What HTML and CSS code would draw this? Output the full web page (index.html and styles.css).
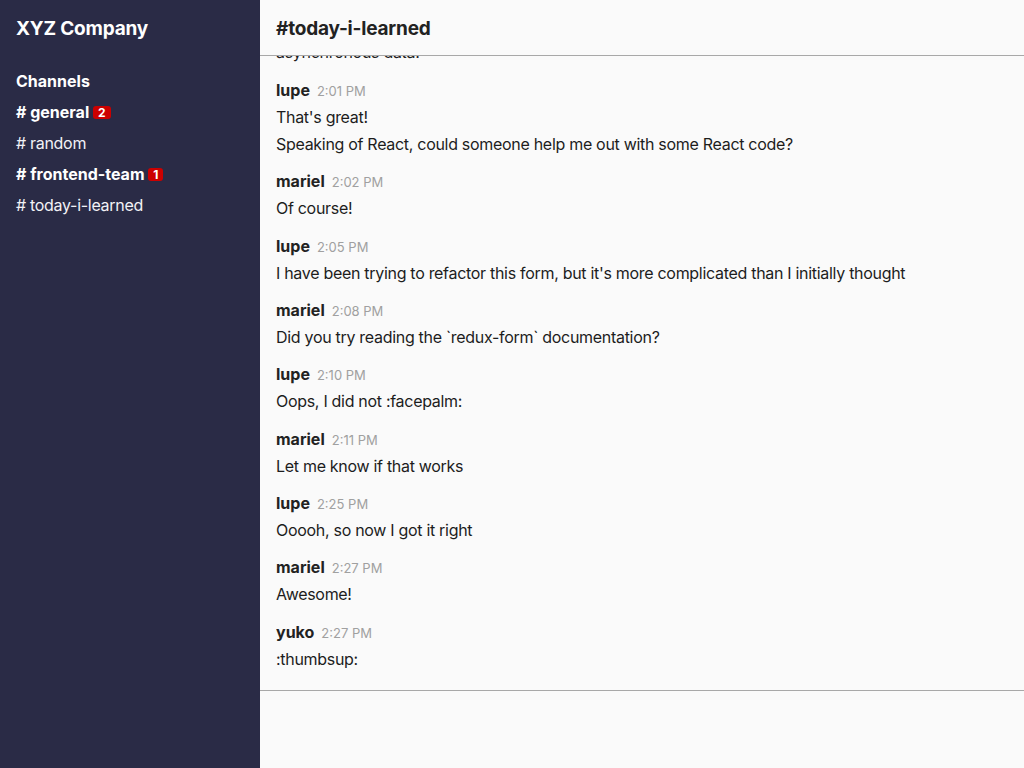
FILE: index.html
```html
<!DOCTYPE html>
<html>
<head>
<meta charset="utf-8">
<link rel="stylesheet" href="styles.css">
</head>
<body>
<div class="app">
  <aside class="sidebar">
    <h1 class="team">XYZ Company</h1>
    <h2 class="section">Channels</h2>
    <ul class="channels">
      <li class="channel unread"># general <span class="badge">2</span></li>
      <li class="channel"># random</li>
      <li class="channel unread"># frontend-team <span class="badge">1</span></li>
      <li class="channel"># today-i-learned</li>
    </ul>
  </aside>
  <main class="main">
    <header class="header"><h2 class="title">#today-i-learned</h2></header>
    <section class="messages">
      <div class="list">
        <div class="msg"><div class="meta"><span class="name">mariel</span><span class="time">1:58 PM</span></div><p class="text">Today I learned how to use React hooks to fetch</p><p class="text">asynchronous data.</p></div>
        <div class="msg"><div class="meta"><span class="name">lupe</span><span class="time">2:01 PM</span></div><p class="text">That's great!</p><p class="text">Speaking of React, could someone help me out with some React code?</p></div>
        <div class="msg"><div class="meta"><span class="name">mariel</span><span class="time">2:02 PM</span></div><p class="text">Of course!</p></div>
        <div class="msg"><div class="meta"><span class="name">lupe</span><span class="time">2:05 PM</span></div><p class="text">I have been trying to refactor this form, but it's more complicated than I initially thought</p></div>
        <div class="msg"><div class="meta"><span class="name">mariel</span><span class="time">2:08 PM</span></div><p class="text">Did you try reading the `redux-form` documentation?</p></div>
        <div class="msg"><div class="meta"><span class="name">lupe</span><span class="time">2:10 PM</span></div><p class="text">Oops, I did not :facepalm:</p></div>
        <div class="msg"><div class="meta"><span class="name">mariel</span><span class="time">2:11 PM</span></div><p class="text">Let me know if that works</p></div>
        <div class="msg"><div class="meta"><span class="name">lupe</span><span class="time">2:25 PM</span></div><p class="text">Ooooh, so now I got it right</p></div>
        <div class="msg"><div class="meta"><span class="name">mariel</span><span class="time">2:27 PM</span></div><p class="text">Awesome!</p></div>
        <div class="msg"><div class="meta"><span class="name">yuko</span><span class="time">2:27 PM</span></div><p class="text">:thumbsup:</p></div>
      </div>
    </section>
    <footer class="composer"></footer>
  </main>
</div>
</body>
</html>
```
FILE: styles.css
```css
* { box-sizing: border-box; }
html, body { margin: 0; padding: 0; height: 100%; }
body {
  font-family: Inter, "Noto Sans", sans-serif;
  color: #1d1d1d;
  background: #fafafa;
}
.app { display: flex; height: 768px; }
.sidebar {
  width: 260px;
  flex: none;
  background: #2a2b46;
  color: #fff;
  padding: 0 16px;
}
.team {
  margin: 0;
  padding-top: 1px;
  font-size: 19px;
  letter-spacing: -0.2px;
  font-weight: 700;
  line-height: 56px;
}
.section {
  margin: 10px 0 0;
  font-size: 16px;
  font-weight: 700;
  line-height: 28px;
}
.channels { list-style: none; margin: 2px 0 0; padding: 0; }
.channel {
  font-size: 16px;
  line-height: 31px;
  height: 31px;
  color: #f2f2f6;
  letter-spacing: -0.3px;
  display: flex;
  align-items: center;
  white-space: pre;
}
.channel.unread { font-weight: 700; color: #fff; letter-spacing: 0; }
.badge {
  display: inline-block;
  background: #cc0000;
  color: #fff;
  font-size: 12px;
  font-weight: 700;
  line-height: 13px;
  height: 13px;
  padding: 0 5px;
  border-radius: 3px;
}
.main {
  flex: 1;
  display: flex;
  flex-direction: column;
  background: #fafafa;
  min-width: 0;
}
.header {
  height: 56px;
  flex: none;
  border-bottom: 1px solid #a8a8a8;
  padding: 1px 16px 0;
  display: flex;
  align-items: center;
}
.title { margin: 0; font-size: 19px; letter-spacing: -0.2px; font-weight: 700; color: #222; }
.messages {
  flex: 1;
  overflow: hidden;
  display: flex;
  flex-direction: column;
  justify-content: flex-end;
  padding: 0 16px 11px;
}
.msg { padding: 6.2px 0; }
.meta {
  display: flex;
  align-items: baseline;
  gap: 7px;
  height: 22px;
  line-height: 22px;
  margin-bottom: 3px;
  overflow: hidden;
}
.name { font-size: 16px; font-weight: 700; color: #222; line-height: 22px; }
.time { font-size: 13px; color: #a0a0a0; line-height: 22px; }
.text { margin: 0; font-size: 16px; line-height: 27px; letter-spacing: -0.3px; color: #1d1d1d; }
.composer {
  height: 78px;
  flex: none;
  border-top: 1px solid #a8a8a8;
}
```
